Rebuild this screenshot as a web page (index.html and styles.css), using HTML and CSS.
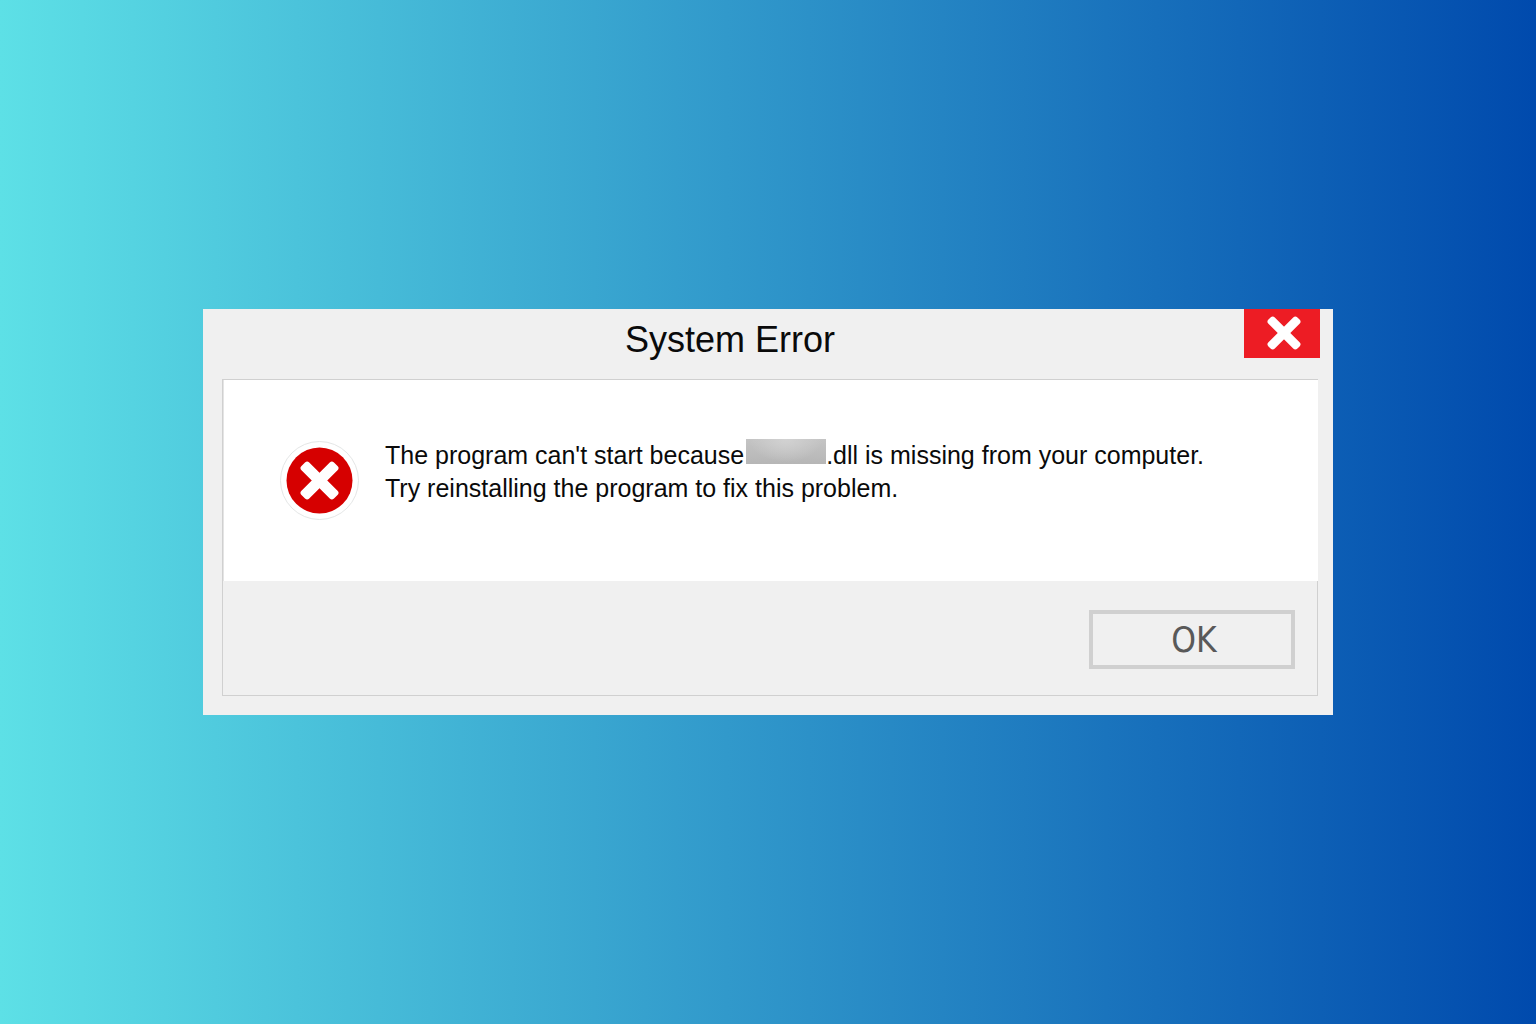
FILE: index.html
```html
<!DOCTYPE html>
<html lang="en">
<head>
<meta charset="utf-8">
<meta name="viewport" content="width=device-width, initial-scale=1">
<title>System Error</title>
<link rel="stylesheet" href="styles.css">
</head>
<body>
<main class="dialog" role="alertdialog" aria-labelledby="dialog-title" aria-describedby="dialog-message">
  <header class="titlebar">
    <h1 class="title" id="dialog-title">System Error</h1>
    <button class="close" type="button" aria-label="Close">
      <svg class="close-icon" viewBox="0 0 36 36" aria-hidden="true">
        <rect x="-2.5" y="13.5" width="41" height="9" rx="3" transform="rotate(45 18 18)"/>
        <rect x="-2.5" y="13.5" width="41" height="9" rx="3" transform="rotate(-45 18 18)"/>
      </svg>
    </button>
  </header>
  <section class="panel">
    <div class="content">
      <svg class="error-icon" viewBox="0 0 80 80" aria-hidden="true">
        <circle class="ring" cx="39.5" cy="40.5" r="39"/>
        <circle class="disc" cx="39.5" cy="40.5" r="33"/>
        <g class="cross">
          <rect x="16.5" y="35" width="46" height="11" rx="3" transform="rotate(45 39.5 40.5)"/>
          <rect x="16.5" y="35" width="46" height="11" rx="3" transform="rotate(-45 39.5 40.5)"/>
        </g>
      </svg>
      <p class="message" id="dialog-message">The program can't start because<span class="redacted"></span>.dll is missing from your computer.<br>Try reinstalling the program to fix this problem.</p>
    </div>
    <footer class="actions">
      <button class="ok" type="button">OK</button>
    </footer>
  </section>
</main>
</body>
</html>
```
FILE: styles.css
```css
* {
  box-sizing: border-box;
}

body {
  margin: 0;
  min-height: 100vh;
  display: flex;
  align-items: center;
  justify-content: center;
  background: linear-gradient(90deg, #5de0e6, #004aad);
  font-family: "Liberation Sans", Arial, sans-serif;
  color: #0a0a0a;
}

.dialog {
  width: 100%;
  max-width: 1130px;
  padding-bottom: 19px;
  background: #f0f0f0;
}

.titlebar {
  display: flex;
  align-items: flex-start;
  padding: 0 13px 8px;
}

.title {
  flex: 1;
  margin: 0;
  font-size: 36px;
  font-weight: 400;
  line-height: 62px;
  text-align: center;
}

.close {
  display: flex;
  align-items: center;
  justify-content: center;
  width: 76px;
  height: 49px;
  padding: 0 0 2px 4px;
  border: 0;
  background: #ed1c24;
}

.close-icon {
  width: 36px;
  height: 36px;
  fill: #fff;
}

.panel {
  margin: 0 15px 0 19px;
  border: 1px solid #d0d0d0;
  border-right: 0;
}

.content {
  display: flex;
  align-items: flex-start;
  gap: 25px;
  min-height: 201px;
  padding: 59px 56px;
  border-left: 1px solid #e4e4e4;
  background: #fff;
}

.error-icon {
  flex: none;
  width: 80px;
  height: 82px;
}

.ring {
  fill: #fff;
  stroke: #e4e6e6;
  stroke-width: 1;
}

.disc {
  fill: #d60000;
}

.cross {
  fill: #fff;
}

.message {
  margin: 0;
  font-size: 25px;
  line-height: 33px;
}

.redacted {
  display: inline-block;
  width: 80px;
  height: 25px;
  margin-left: 2px;
  background:
    radial-gradient(ellipse at 50% 0, #d2d2d2, transparent 65%),
    linear-gradient(#c4c4c4, #b6b6b6);
}

.actions {
  display: flex;
  justify-content: flex-end;
  padding: 29px 22px 26px;
  border-right: 1px solid #d0d0d0;
}

.ok {
  width: 206px;
  height: 59px;
  padding: 2px 0 0 4px;
  border: 4px solid #d0d0d0;
  background: #f0f0f0;
  color: #595959;
  font-family: "DejaVu Sans Condensed", "Open Sans", sans-serif;
  font-size: 35px;
  line-height: 49px;
}
```
